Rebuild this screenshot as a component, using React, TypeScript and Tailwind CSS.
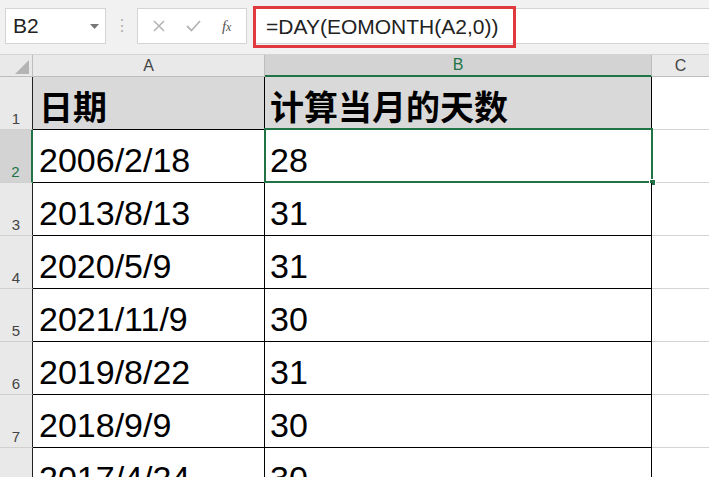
import React from "react";

const rows: [string, string][] = [
  ["日期", "计算当月的天数"],
  ["2006/2/18", "28"],
  ["2013/8/13", "31"],
  ["2020/5/9", "31"],
  ["2021/11/9", "30"],
  ["2019/8/22", "31"],
  ["2018/9/9", "30"],
  ["2017/4/24", "30"],
];

const font = "font-['Liberation_Sans','Noto_Sans_CJK_SC',sans-serif]";

export default function App() {
  return (
    <div className={`w-[709px] h-[477px] overflow-hidden bg-white ${font}`}>
      {/* formula bar */}
      <div className="h-[54px] bg-[#f1f1f1] flex items-start pt-[8px] pl-[5px]">
        <div className="w-[101px] h-[36px] bg-white border border-[#d4d4d4] flex items-center pl-[7px] pr-[6px]">
          <span className="text-[21px] text-[#222]">B2</span>
          <svg className="ml-auto" width="9" height="5" viewBox="0 0 9 5">
            <path d="M0 0 H9 L4.5 5 Z" fill="#777" />
          </svg>
        </div>
        <div className="w-[31px] h-[36px] flex items-center justify-center text-[#b0b0b0] text-[16px]">⋮</div>
        <div className="w-[110px] h-[36px] bg-white border border-[#d4d4d4] flex items-center justify-around px-[4px]">
          <svg width="12" height="12" viewBox="0 0 12 12">
            <path d="M1 1 L11 11 M11 1 L1 11" stroke="#b5b5b5" strokeWidth="1.6" />
          </svg>
          <svg width="15" height="12" viewBox="0 0 15 12">
            <path d="M1 6 L5.5 10.5 L14 1" stroke="#b5b5b5" strokeWidth="1.8" fill="none" />
          </svg>
          <span className="font-['Liberation_Serif',serif] italic text-[15px] text-[#555]">
            f<span className="text-[12px]">x</span>
          </span>
        </div>
        <div className="relative ml-[6px] flex-1 h-[36px] bg-white border-y border-[#d4d4d4] flex items-center pl-[13px]">
          <div className="absolute left-0 top-[-3px] w-[263px] h-[42px] border-[3px] border-[#e0393e]" />
          <span className="text-[21px] text-[#222] leading-none">=DAY(EOMONTH(A2,0))</span>
        </div>
      </div>

      {/* sheet */}
      <div className="grid grid-cols-[33px_232px_387px_1fr] border-t border-[#d4d4d4] bg-[#f1f1f1]">
        {/* column headers */}
        <div className="h-[22px] bg-[#e9e9e9] border-r border-b border-[#bdbdbd] flex items-end justify-end pr-[3px] pb-[2px]">
          <svg width="14" height="14" viewBox="0 0 14 14">
            <path d="M14 0 V14 H0 Z" fill="#b4b4b4" />
          </svg>
        </div>
        <div className="h-[22px] bg-[#e9e9e9] border-r border-b border-[#bdbdbd] flex items-center justify-center text-[16px] text-[#444]">A</div>
        <div className="h-[22px] bg-[#d3d3d3] border-r border-[#bdbdbd] border-b-2 border-b-[#217346] flex items-center justify-center text-[16px] text-[#217346]">B</div>
        <div className="h-[22px] bg-[#e9e9e9] border-b border-[#bdbdbd] flex items-center justify-center text-[16px] text-[#444]">C</div>

        {rows.map(([a, b], i) => {
          const head = i === 0;
          const sel = i === 1;
          const text = head
            ? "text-[34px] font-bold text-black font-['Noto_Sans_CJK_SC',sans-serif] leading-[40px] pb-[3px]"
            : "text-[34px] text-black leading-[34px] pb-[5px]";
          return (
            <React.Fragment key={i}>
              <div
                className={`h-[53px] flex items-end justify-center pb-[1px] text-[15px] leading-[18px] border-b border-[#d0d0d0] ${
                  sel
                    ? "bg-[#d3d3d3] text-[#217346] border-r-2 border-r-[#217346]"
                    : "bg-[#e9e9e9] text-[#444] border-r border-r-[#222]"
                }`}
              >
                {i + 1}
              </div>
              <div
                className={`h-[53px] flex items-end pl-[6px] border-r border-b border-black ${
                  head ? "bg-[#d9d9d9]" : "bg-white"
                } ${text}`}
              >
                {a}
              </div>
              <div
                className={`relative h-[53px] flex items-end pl-[5px] border-r border-b border-black ${
                  head ? "bg-[#d9d9d9]" : "bg-white"
                } ${text}`}
              >
                {b}
                {sel && (
                  <>
                    <div className="absolute left-[-1px] top-[-2px] right-[-2px] bottom-[-1px] border-2 border-[#217346]" />
                    <div className="absolute right-[-5px] bottom-[-4px] w-[7px] h-[7px] bg-[#217346] border border-white" />
                  </>
                )}
              </div>
              <div className="h-[53px] bg-white border-b border-[#d4d4d4]" />
            </React.Fragment>
          );
        })}
      </div>
    </div>
  );
}
